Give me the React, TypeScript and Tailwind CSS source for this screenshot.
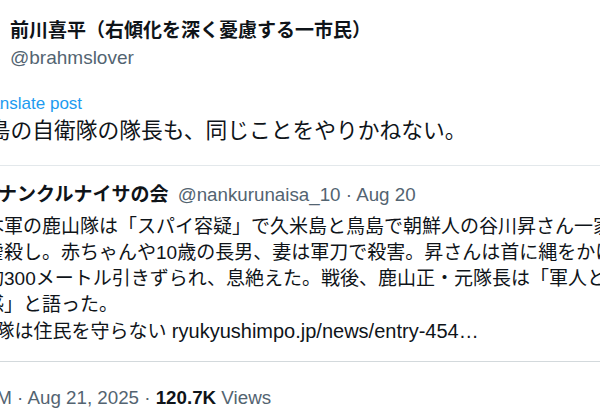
import React from 'react';

const quoteLines = [
  '日本軍の鹿山隊は「スパイ容疑」で久米島と鳥島で朝鮮人の谷川昇さん一家',
  'を虐殺し。赤ちゃんや10歳の長男、妻は軍刀で殺害。昇さんは首に縄をかけられ、車',
  'で約300メートル引きずられ、息絶えた。戦後、鹿山正・元隊長は「軍人として',
  '悪感」と語った。',
];

const App: React.FC = () => {
  return (
    <div className="w-[600px] h-[420px] overflow-hidden bg-white text-[#0f1419] font-['Liberation_Sans','Noto_Sans_CJK_JP',sans-serif]">
      {/* author */}
      <div className="pl-[10px] pt-[18px]">
        <div className="text-[19px] leading-[25px] font-bold whitespace-nowrap">前川喜平（右傾化を深く憂慮する一市民）</div>
        <div className="mt-[2px] text-[19px] leading-[25px] text-[#536471]">@brahmslover</div>
      </div>

      {/* body column */}
      <div className="ml-[-25px] w-[760px]">
        <div className="mt-[23px] text-[17px] leading-[22px] text-[#1d9bf0]">Translate post</div>
        <div className="mt-[1px] ml-[-8px] text-[21.75px] leading-[30px] whitespace-nowrap">
          離島の自衛隊の隊長も、同じことをやりかねない。
        </div>

        {/* quoted post */}
        <div className="mt-[19px] ml-[-23px] rounded-[20px] border border-[#d3d9dc] border-t-[#e3e8eb] px-[15px] pt-[16px] pb-[16px]">
          <div className="pl-[30px] text-[18.75px] leading-[25px] whitespace-nowrap">
            <span className="font-bold text-[19px]">ナンクルナイサの会</span>
            <span className="pl-[4px] text-[#536471]"> @nankurunaisa_10 · Aug 20</span>
          </div>
          <div className="mt-[7px] ml-[-2px] text-[19px] leading-[26px]">
            {quoteLines.map((line) => (
              <div key={line} className="whitespace-nowrap">{line}</div>
            ))}
            <div className="whitespace-nowrap">
              #軍隊は住民を守らない <span className="text-[20px]">ryukyushimpo.jp/news/entry-454…</span>
            </div>
          </div>
        </div>
      </div>

      {/* meta */}
      <div className="ml-[-58px] mt-[23px] text-[18.75px] leading-[25px] whitespace-nowrap text-[#536471]">
        6:24 PM · Aug 21, 2025 · <span className="font-bold text-[#0f1419]">120.7K</span> Views
      </div>
    </div>
  );
};

export default App;
